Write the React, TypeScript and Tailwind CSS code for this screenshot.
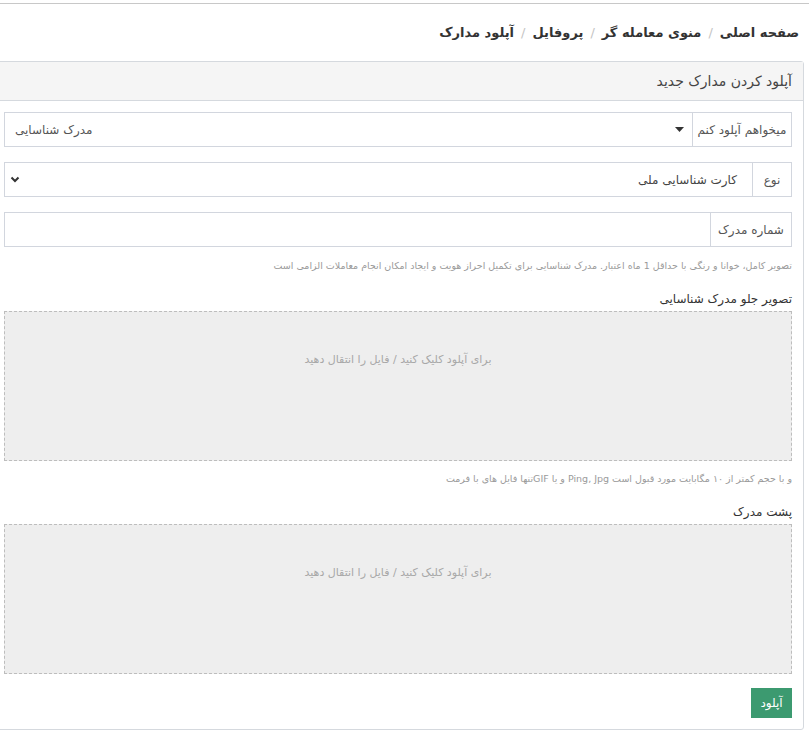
import React from "react";

const crumbs = ["صفحه اصلی", "منوی معامله گر", "پروفایل", "آپلود مدارک"];

function Dropzone() {
  return (
    <div className="h-[150px] bg-[#eeeeee] border border-dashed border-[#bdbdbd] pt-[40px] text-center text-[11px] leading-[16px] text-[#a8a8a8]">
      برای آپلود کلیک کنید / فایل را انتقال دهید
    </div>
  );
}

export default function App() {
  return (
    <div dir="rtl" className="min-h-[738px] bg-white pt-[3px] overflow-hidden font-['DejaVu_Sans',sans-serif]">
      <div className="border-t border-[#c8c8c8]">
        <nav className="h-[57px] flex items-center pr-[10px] text-[13px] font-bold text-[#333]">
          {crumbs.map((c, i) => (
            <span key={c} className="flex items-center">
              {i > 0 && <span className="px-[7px] font-normal text-[#c4c4c4]">/</span>}
              {c}
            </span>
          ))}
        </nav>

        <div className="mr-[5px] ml-[-8px] border border-[#d5d9de] rounded-[3px]">
          <div className="h-[39px] bg-[#f5f5f5] border-b border-[#d5d9de] flex items-center pr-[11px] text-[14px] text-[#444]">
            آپلود کردن مدارک جدید
          </div>

          <div className="px-[11px] pt-[11px] pb-[11px]">
            <div className="flex h-[35px] text-[12px] text-[#555]">
              <div className="w-[100px] border border-[#d2d6de] flex items-center justify-center">میخواهم آپلود کنم</div>
              <div dir="ltr" className="flex-1 border border-r-0 border-[#d2d6de] flex items-center justify-between pl-[10px] pr-[8px]">
                <span dir="rtl">مدرک شناسایی</span>
                <svg width="9" height="5" viewBox="0 0 9 5"><path d="M0 0h9L4.5 5z" fill="#333" /></svg>
              </div>
            </div>

            <div className="flex h-[35px] mt-[15px] text-[12px] text-[#555]">
              <div className="w-[40px] border border-[#d2d6de] flex items-center justify-center">نوع</div>
              <div className="flex-1 border border-r-0 border-[#d2d6de] flex items-center justify-between pr-[15px] pl-[5px] text-[#444]">
                <span>کارت شناسایی ملی</span>
                <svg width="10" height="7" viewBox="0 0 10 7"><path d="M1.5 1.5L5 5l3.5-3.5" stroke="#333" strokeWidth="2" fill="none" /></svg>
              </div>
            </div>

            <div className="flex h-[35px] mt-[15px] text-[12px] text-[#555]">
              <div className="w-[82px] border border-[#d2d6de] flex items-center justify-center">شماره مدرک</div>
              <div className="flex-1 border border-r-0 border-[#d2d6de]" />
            </div>

            <p className="mt-[11px] text-[9.5px] leading-[15px] text-[#9a9a9a]">
              تصویر کامل، خوانا و رنگی با حداقل 1 ماه اعتبار. مدرک شناسایی برای تکمیل احراز هویت و ایجاد امکان انجام معاملات الزامی است
            </p>

            <div className="mt-[17px] mb-[3px] text-[12px] leading-[18px] text-[#333]">تصویر جلو مدرک شناسایی</div>
            <Dropzone />

            <p className="mt-[10px] text-[9.5px] leading-[15px] text-[#9a9a9a]">
              و با حجم کمتر از ۱۰ مگابایت مورد قبول است Ping, Jpg و یا GIFتنها فایل های با فرمت
            </p>

            <div className="mt-[17px] mb-[3px] text-[12px] leading-[18px] text-[#333]">پشت مدرک</div>
            <Dropzone />

            <div className="mt-[14px] flex">
              <button className="h-[30px] w-[41px] bg-[#3c9a70] text-white text-[12px]">آپلود</button>
            </div>
          </div>
        </div>
      </div>
    </div>
  );
}
